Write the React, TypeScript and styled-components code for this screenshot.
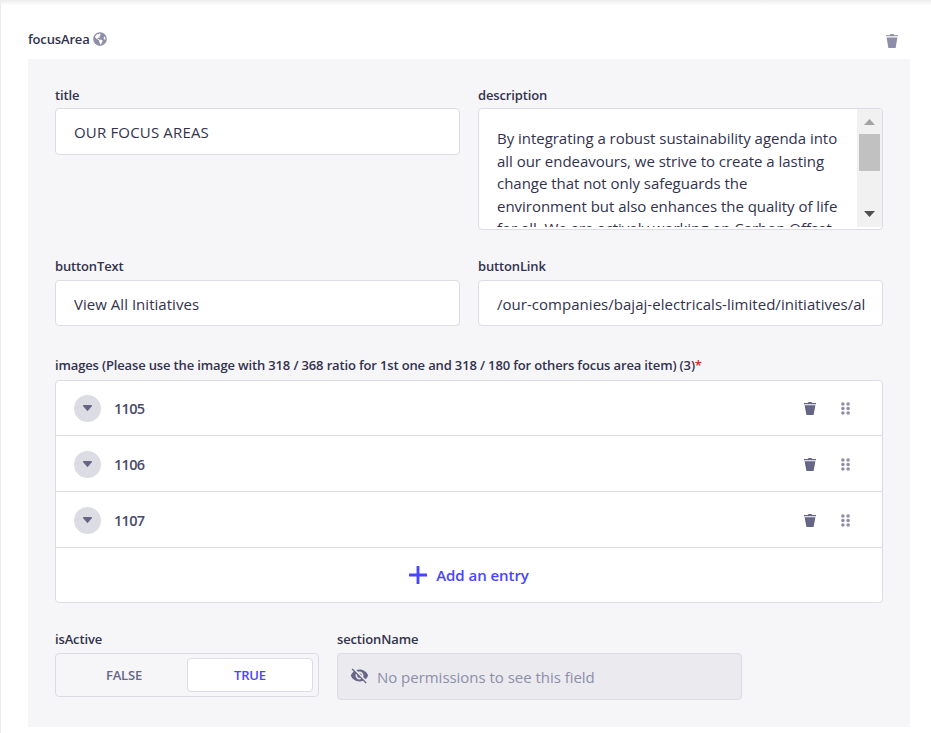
import React from "react";
import styled, { createGlobalStyle } from "styled-components";
import { FaGlobeAmericas } from "react-icons/fa";
import { MdVisibilityOff } from "react-icons/md";

const color = {
  text: "#32324d",
  muted: "#666687",
  faint: "#8e8ea9",
  border: "#dcdce4",
  panel: "#f6f6f9",
  disabled: "#eaeaef",
  primary: "#4945ff",
  danger: "#d02b20",
};

const GlobalStyle = createGlobalStyle`
  *, *::before, *::after { box-sizing: border-box; }
  body {
    margin: 0;
    background: #fff;
    color: ${color.text};
    font-family: "Open Sans", "Segoe UI", sans-serif;
    font-size: 15px;
    overflow: hidden;
  }
  button { font: inherit; border: 0; padding: 0; background: none; cursor: pointer; }
`;

const Page = styled.main`
  height: 733px;
  padding: 29px 21px 0 27px;
  border-left: 1px solid ${color.disabled};
  background: linear-gradient(#ededee, #f7f7f8 3px, #fff 6px) no-repeat 0 0 / 100% 6px;
`;

const Header = styled.header`
  height: 30px;
  display: flex;
  align-items: flex-start;
  justify-content: space-between;
  padding-right: 12px;
`;

const Label = styled.label`
  display: flex;
  align-items: center;
  height: 20px;
  font-size: 13px;
  font-weight: 600;
  line-height: 20px;
  letter-spacing: -0.147px;
  white-space: nowrap;
`;

const Required = styled.span`
  color: ${color.danger};
`;

const Globe = styled(FaGlobeAmericas)`
  width: 14px;
  height: 14px;
  margin-left: 3px;
  color: ${color.faint};
`;

const HeaderDelete = styled.button`
  display: flex;
  margin-top: 5px;
  color: ${color.faint};
`;

const Panel = styled.section`
  height: 668px;
  padding: 26px 27px 0;
  background: ${color.panel};
`;

const FieldRow = styled.div<{ $height: number }>`
  display: flex;
  gap: 18px;
  height: ${(p) => p.$height}px;
`;

const Field = styled.div<{ $width?: number }>`
  width: ${(p) => p.$width ?? 405}px;
  flex: none;
`;

const TextInput = styled.input<{ $tall?: boolean }>`
  display: block;
  width: 100%;
  height: ${(p) => (p.$tall ? 47 : 46)}px;
  margin-top: ${(p) => (p.$tall ? 3 : 4)}px;
  padding: ${(p) => (p.$tall ? 0 : 2)}px 17px 0 18px;
  border: 1px solid ${color.border};
  border-radius: 4px;
  outline: 0;
  background: #fff;
  color: ${color.text};
  font: inherit;
  letter-spacing: ${(p) => (p.$tall ? 0.17 : 0.03)}px;
`;

const TextArea = styled.div`
  display: flex;
  height: 122px;
  margin-top: 3px;
  padding-bottom: 2px;
  border: 1px solid ${color.border};
  border-radius: 4px;
  background: #fff;
  overflow: hidden;
`;

const Paragraph = styled.div`
  flex: 1;
  height: 118px;
  padding: 18px 0 0 18px;
  line-height: 22.6px;
  letter-spacing: -0.03px;
  white-space: pre;
  overflow: hidden;
`;

const Scrollbar = styled.div`
  width: 25px;
  height: 118px;
  padding: 10px 0;
  display: flex;
  flex-direction: column;
  align-items: center;
  background: #f1f1f1;
`;

const ScrollThumb = styled.div`
  width: 21px;
  height: 37px;
  margin: 9px 0 auto;
  background: #c1c1c1;
`;

const EntryList = styled.div`
  height: 223px;
  margin: 5px 0 26px;
  border: 1px solid ${color.border};
  border-radius: 4px;
  background: #fff;
  overflow: hidden;
`;

const Entry = styled.div`
  display: flex;
  align-items: center;
  height: 56px;
  padding: 1px 32px 0 18px;
  border-bottom: 1px solid ${color.border};
  &:first-child { height: 55px; padding-top: 0; }
`;

const Toggle = styled.button`
  display: flex;
  align-items: center;
  justify-content: center;
  width: 27px;
  height: 27px;
  border-radius: 50%;
  background: ${color.border};
  color: ${color.muted};
`;

const EntryName = styled.span`
  flex: 1;
  margin-left: 13px;
  padding-top: 1px;
  color: #4a4a6a;
  font-size: 14.5px;
  font-weight: 600;
  line-height: 20px;
  letter-spacing: -0.7px;
`;

const EntryActions = styled.div`
  display: flex;
  align-items: center;
  gap: 25px;
  color: ${color.muted};
`;

const AddEntry = styled.button`
  display: flex;
  align-items: center;
  justify-content: center;
  gap: 9px;
  width: 100%;
  height: 54px;
  color: ${color.primary};
  font-weight: 600;
  letter-spacing: -0.05px;
`;

const Switch = styled.div`
  display: flex;
  height: 44px;
  margin-top: 4px;
  padding: 4px 5px;
  border: 1px solid ${color.border};
  border-radius: 4px;
`;

const Option = styled.button<{ $active?: boolean }>`
  flex: 1;
  border-radius: 4px;
  border: 1px solid ${(p) => (p.$active ? color.border : "transparent")};
  background: ${(p) => (p.$active ? "#fff" : "transparent")};
  color: ${(p) => (p.$active ? color.primary : color.muted)};
  font-size: 13px;
  font-weight: 600;
  letter-spacing: -0.15px;
`;

const Restricted = styled.div`
  display: flex;
  align-items: center;
  height: 47px;
  margin-top: 4px;
  padding: 0 13px;
  border: 1px solid ${color.border};
  border-radius: 4px;
  background: ${color.disabled};
  color: ${color.faint};
  letter-spacing: -0.03px;
`;

const HiddenIcon = styled(MdVisibilityOff)`
  width: 19px;
  height: 19px;
  margin: -3px 8px 0 -1px;
  color: ${color.muted};
`;

const RestrictedText = styled.span`
  padding-top: 1px;
`;

const Trash = ({ height }: { height: number }) => (
  <svg width="12" height={height} viewBox="2 0 20 24" preserveAspectRatio="none" fill="currentColor">
    <path d="M3.236 6.149a.2.2 0 00-.197.233L6 24h12l2.96-17.618a.2.2 0 00-.196-.233H3.236zM21.8 1.983c.11 0 .2.09.2.2v1.584a.2.2 0 01-.2.2H2.2a.2.2 0 01-.2-.2V2.183c0-.11.09-.2.2-.2h5.511c.9 0 1.631-1.09 1.631-1.983h5.316c0 .894.73 1.983 1.631 1.983H21.8z" />
  </svg>
);

const Handle = () => (
  <svg width="9" height="13" viewBox="0 0 9 13" fill={color.faint}>
    {[1.9, 6.5, 11.1].map((y) => (
      <React.Fragment key={y}>
        <circle cx="1.9" cy={y} r="1.75" />
        <circle cx="7.1" cy={y} r="1.75" />
      </React.Fragment>
    ))}
  </svg>
);

const Caret = () => (
  <svg width="9" height="6" viewBox="0 0 14 8" preserveAspectRatio="none" fill="currentColor">
    <path d="M14 .889a.86.86 0 01-.26.625L7.615 7.736A.834.834 0 017 8a.834.834 0 01-.615-.264L.26 1.514A.861.861 0 010 .889c0-.24.087-.45.26-.625A.834.834 0 01.875 0h12.25c.237 0 .442.088.615.264a.86.86 0 01.26.625z" />
  </svg>
);

const Plus = () => (
  <svg width="18" height="18" viewBox="0 0 24 24" fill="currentColor">
    <path d="M24 13.604a.3.3 0 01-.3.3h-9.795V23.7a.3.3 0 01-.3.3h-3.21a.3.3 0 01-.3-.3v-9.795H.3a.3.3 0 01-.3-.3v-3.21a.3.3 0 01.3-.3h9.795V.3a.3.3 0 01.3-.3h3.21a.3.3 0 01.3.3v9.795H23.7a.3.3 0 01.3.3v3.21z" />
  </svg>
);

const Arrow = ({ down }: { down?: boolean }) => (
  <svg width="11" height="6" viewBox="0 0 11 6">
    <path d={down ? "M0 0h11L5.5 6z" : "M5.5 0L11 6H0z"} fill={down ? "#505050" : "#a3a3a3"} />
  </svg>
);

const description = [
  "By integrating a robust sustainability agenda into",
  "all our endeavours, we strive to create a lasting",
  "change that not only safeguards the",
  "environment but also enhances the quality of life",
  "for all. We are actively working on Carbon Offset",
].join("\n");

const entries = ["1105", "1106", "1107"];

export default function App() {
  return (
    <>
      <GlobalStyle />
      <Page>
        <Header>
          <Label as="span">focusArea<Globe /></Label>
          <HeaderDelete aria-label="Delete"><Trash height={14} /></HeaderDelete>
        </Header>
        <Panel>
          <FieldRow $height={171}>
            <Field>
              <Label>title</Label>
              <TextInput $tall defaultValue="OUR FOCUS AREAS" />
            </Field>
            <Field>
              <Label>description</Label>
              <TextArea>
                <Paragraph>{description}</Paragraph>
                <Scrollbar>
                  <Arrow />
                  <ScrollThumb />
                  <Arrow down />
                </Scrollbar>
              </TextArea>
            </Field>
          </FieldRow>
          <FieldRow $height={99}>
            <Field>
              <Label>buttonText</Label>
              <TextInput defaultValue="View All Initiatives" />
            </Field>
            <Field>
              <Label>buttonLink</Label>
              <TextInput defaultValue="/our-companies/bajaj-electricals-limited/initiatives/al" />
            </Field>
          </FieldRow>
          <Label as="span">
            images (Please use the image with 318 / 368 ratio for 1st one and 318 / 180 for others focus area item) (3)
            <Required>*</Required>
          </Label>
          <EntryList>
            {entries.map((name) => (
              <Entry key={name}>
                <Toggle aria-label="Expand"><Caret /></Toggle>
                <EntryName>{name}</EntryName>
                <EntryActions>
                  <Trash height={13} />
                  <Handle />
                </EntryActions>
              </Entry>
            ))}
            <AddEntry><Plus />Add an entry</AddEntry>
          </EntryList>
          <FieldRow $height={98}>
            <Field $width={264}>
              <Label as="span">isActive</Label>
              <Switch>
                <Option>FALSE</Option>
                <Option $active>TRUE</Option>
              </Switch>
            </Field>
            <Field>
              <Label as="span">sectionName</Label>
              <Restricted>
                <HiddenIcon />
                <RestrictedText>No permissions to see this field</RestrictedText>
              </Restricted>
            </Field>
          </FieldRow>
        </Panel>
      </Page>
    </>
  );
}
